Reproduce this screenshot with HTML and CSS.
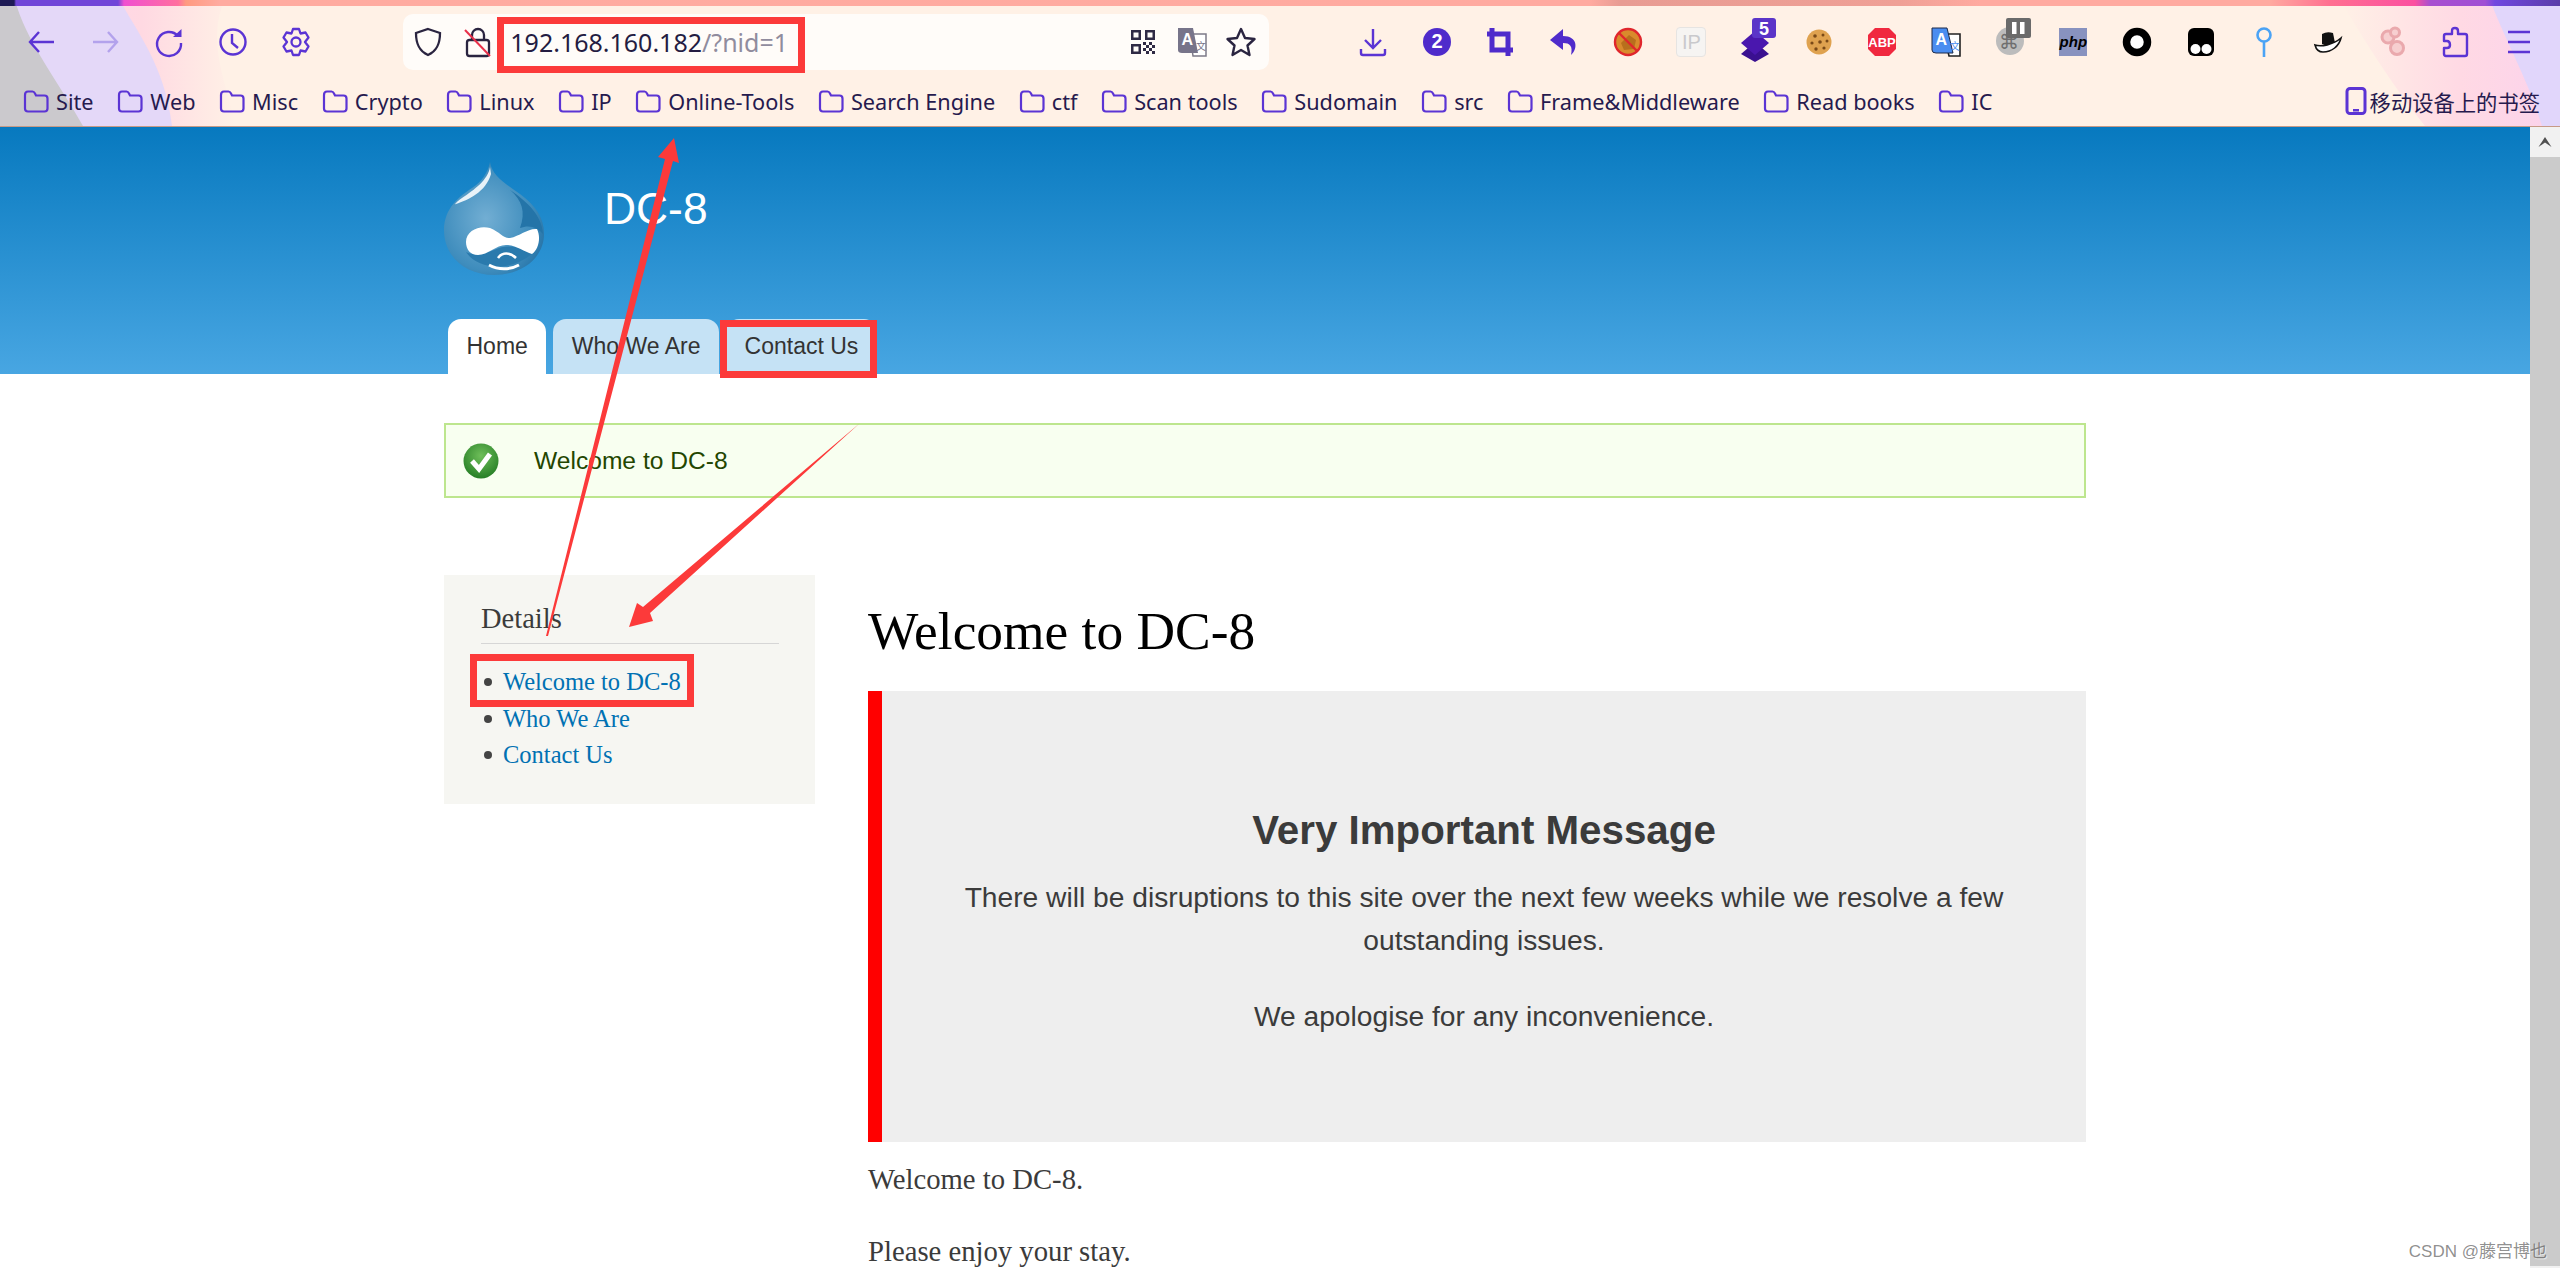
FILE: index.html
```html
<!DOCTYPE html>
<html lang="en">
<head>
<meta charset="UTF-8" />
<meta name="viewport" content="width=device-width, initial-scale=1" />
<title>Welcome to DC-8</title>
<link rel="stylesheet" href="styles.css">
</head>
<body>

<svg width="0" height="0" class="defs">
  <symbol id="folder" viewBox="0 0 26 23">
    <path d="M2 5 Q2 1.5 5 1.5 H9.5 Q11 1.5 12 3.5 L13 5.5 H21.5 Q24.5 5.5 24.5 8.5 V18.5 Q24.5 21.5 21.5 21.5 H5 Q2 21.5 2 18.5 Z" fill="none" stroke="#5b34d4" stroke-width="2.2"/>
  </symbol>
</svg>

<header class="chrome">
  <!-- theme art behind the toolbars -->
  <svg class="theme" viewBox="0 0 2560 127" preserveAspectRatio="none">
    <defs>
      <linearGradient id="leftfade" x1="0" x2="1" y1="0" y2="0">
        <stop offset="0" stop-color="#ffd3f2"/>
        <stop offset="0.6" stop-color="#ffd9e2"/>
        <stop offset="1" stop-color="#fff1e6"/>
      </linearGradient>
      <linearGradient id="rightfade" x1="0" x2="1" y1="0" y2="0">
        <stop offset="0" stop-color="#fff1e6"/>
        <stop offset="0.55" stop-color="#ffd9e4"/>
        <stop offset="1" stop-color="#fbd2ec"/>
      </linearGradient>
    </defs>
    <path d="M0 0 H225 C205 40 228 90 236 127 H0 Z" fill="url(#leftfade)"/>
    <path d="M0 0 H120 C135 30 165 65 172 127 H0 Z" fill="#e4d8f8"/>
    <path d="M0 0 H15 C25 40 60 85 83 127 H0 Z" fill="#cbc9cd"/>
    <path d="M2560 0 H2340 C2370 50 2395 90 2425 127 H2560 Z" fill="url(#rightfade)"/>
    <path d="M2560 0 H2490 C2505 40 2530 85 2542 127 H2560 Z" fill="#e1d6fb"/>
  </svg>

  <div class="strip"></div>

  <div class="toolbar">
    <div class="btn-group">
      <span class="tb"><svg class="ic" viewBox="0 0 32 32" fill="none" stroke="#5b34d4" stroke-width="2.4"><path d="M28 16 H5 M13 6 L4 16 L13 26"/></svg></span>
      <span class="tb"><svg class="ic" viewBox="0 0 32 32" fill="none" stroke="#b3a2ec" stroke-width="2.4"><path d="M4 16 H27 M19 6 L28 16 L19 26"/></svg></span>
      <span class="tb"><svg class="ic" viewBox="0 0 32 32" fill="none" stroke="#5b34d4" stroke-width="2.4"><path d="M25 10 A12 12 0 1 0 28 17"/><path d="M20 11 L28.5 11 L28.5 3 Z" fill="#5b34d4" stroke="none"/></svg></span>
      <span class="tb"><svg class="ic" viewBox="0 0 32 32" fill="none" stroke="#5b34d4" stroke-width="2.4"><circle cx="16" cy="16" r="12.5"/><path d="M15 8 V17 L21 22"/></svg></span>
      <span class="tb"><svg class="ic" viewBox="0 0 32 32" fill="none" stroke="#5b34d4" stroke-width="2.3"><path d="M13 3 H19 L20.5 7.5 L25.5 6.5 L28.5 11.5 L25 16 L28.5 20.5 L25.5 25.5 L20.5 24.5 L19 29 H13 L11.5 24.5 L6.5 25.5 L3.5 20.5 L7 16 L3.5 11.5 L6.5 6.5 L11.5 7.5 Z" stroke-linejoin="round"/><circle cx="16" cy="16" r="4.5"/></svg></span>
    </div>

    <div class="urlbar">
      <svg class="ic" viewBox="0 0 32 32" fill="none" stroke="#2a2440" stroke-width="2.3"><path d="M16 3 L28 7 C28 18 25 25 16 29 C7 25 4 18 4 7 Z"/></svg>
      <svg class="ic lock" viewBox="0 0 32 32" fill="none" stroke="#2a2440" stroke-width="2.3"><rect x="5" y="14" width="22" height="16" rx="2.5"/><path d="M10 14 V9 A6 6 0 0 1 22 9 V14"/><path d="M3 4 L28 30" stroke="#e8304a" stroke-width="2"/></svg>
      <span class="url">192.168.160.182<span class="url-rest">/?nid=1</span></span>
      <div class="url-actions">
        <svg class="ic" viewBox="0 0 32 32"><g fill="#2f2a45"><path d="M4 4 H14 V14 H4 Z M6.5 6.5 V11.5 H11.5 V6.5 Z M18 4 H28 V14 H18 Z M20.5 6.5 V11.5 H25.5 V6.5 Z M4 18 H14 V28 H4 Z M6.5 20.5 V25.5 H11.5 V20.5 Z" fill-rule="evenodd"/><rect x="16" y="16" width="3" height="3"/><rect x="22" y="16" width="3" height="3"/><rect x="19" y="19" width="3" height="3"/><rect x="25" y="19" width="3" height="3"/><rect x="16" y="22" width="3" height="3"/><rect x="22" y="22" width="3" height="3"/><rect x="19" y="25" width="3" height="3"/><rect x="25" y="25" width="3" height="3"/></g></svg>
        <svg class="ic" viewBox="0 0 32 32"><path d="M14 8 H30 V30 H17 Z" fill="#fff" stroke="#7d7a88" stroke-width="1.5"/><path d="M2 2 H17 L22 27 H6 Q2 27 2 24 Z" fill="#77748a"/><text x="5.5" y="19" class="svg-a">A</text><text x="20" y="24" class="svg-zh">文</text></svg>
        <svg class="ic" viewBox="0 0 32 32" fill="none" stroke="#2a2440" stroke-width="2.4"><path d="M16 3 L20 12 L29.5 13 L22.5 19.5 L24.5 29 L16 24 L7.5 29 L9.5 19.5 L2.5 13 L12 12 Z" stroke-linejoin="round"/></svg>
      </div>
    </div>

    <div class="btn-group ext">
      <span class="tb"><svg class="ic" viewBox="0 0 32 32" fill="none" stroke="#5b34d4" stroke-width="2.4"><path d="M16 3 V22 M8 14 L16 22 L24 14 M4 23 V27 Q4 29 6 29 H26 Q28 29 28 27 V23"/></svg></span>
      <span class="tb"><svg class="ic" viewBox="0 0 32 32"><circle cx="16" cy="16" r="14" fill="#4f2bcb"/><text x="16" y="22" class="svg-badge">2</text></svg></span>
      <span class="tb"><svg class="ic" viewBox="0 0 32 32" fill="none" stroke="#4f2bcb" stroke-width="5"><path d="M3 8 H24 V30 M8 2 V24 H29"/></svg></span>
      <span class="tb"><svg class="ic" viewBox="0 0 32 32"><path d="M15 3 L2 14 L15 24 V17 C22 17 25 20 23 29 C30 23 30 10 15 10 Z" fill="#4f2bcb"/></svg></span>
      <span class="tb"><svg class="ic" viewBox="0 0 32 32"><circle cx="16" cy="16" r="13" fill="#d98a2c"/><path d="M9 17 L17 9 L24 14 L22 23 L12 24 Z" fill="#b86f1d"/><circle cx="16" cy="16" r="13" fill="none" stroke="#e0262c" stroke-width="2.4"/><path d="M7 7 L25 25" stroke="#e0262c" stroke-width="2.4"/></svg></span>
      <span class="tb"><span class="ip-badge">IP</span></span>
      <span class="tb"><svg class="ic big" viewBox="0 0 44 44"><path d="M22 24 L36 36 L22 44 L8 36 Z" fill="#3a1090"/><path d="M22 13 L36 25 L22 37 L8 25 Z" fill="#4a17ae"/><rect x="19" y="0" width="24" height="20" rx="3" fill="#5b34c8"/><text x="31" y="17" class="svg-five">5</text></svg></span>
      <span class="tb"><svg class="ic" viewBox="0 0 32 32"><circle cx="16" cy="16" r="12.5" fill="#dfa24f"/><g fill="#7a4a18"><circle cx="12" cy="10" r="1.8"/><circle cx="20" cy="9" r="1.5"/><circle cx="9" cy="17" r="1.6"/><circle cx="17" cy="16" r="1.8"/><circle cx="24" cy="15" r="1.5"/><circle cx="13" cy="23" r="1.7"/><circle cx="21" cy="22" r="1.6"/></g></svg></span>
      <span class="tb"><svg class="ic" viewBox="0 0 32 32"><path d="M9 2 H23 L30 9 V23 L23 30 H9 L2 23 V9 Z" fill="#f0283f"/><text x="16" y="21" class="svg-abp">ABP</text></svg></span>
      <span class="tb"><svg class="ic" viewBox="0 0 32 32"><path d="M14 8 H30 V30 H19 Z" fill="#fff" stroke="#222" stroke-width="1.6"/><path d="M2 2 H17 L23 27 H6 Q2 27 2 24 Z" fill="#4a8df0" stroke="#1d2a4a" stroke-width="1"/><text x="5.5" y="19" class="svg-a">A</text><text x="20" y="24" class="svg-zh blue">文</text></svg></span>
      <span class="tb"><svg class="ic big" viewBox="0 0 44 44"><circle cx="22" cy="23" r="14" fill="#bcbcbc"/><text x="21" y="31" class="svg-cmd">⌘</text><rect x="18" y="0" width="25" height="20" rx="2" fill="#6a6a6a"/><rect x="24" y="4" width="4.5" height="12" fill="#fff"/><rect x="32" y="4" width="4.5" height="12" fill="#fff"/></svg></span>
      <span class="tb"><span class="php-badge">php</span></span>
      <span class="tb"><svg class="ic" viewBox="0 0 32 32"><circle cx="16" cy="16" r="10.5" fill="#fff" stroke="#000" stroke-width="7.5"/></svg></span>
      <span class="tb"><svg class="ic" viewBox="0 0 32 32"><rect x="3" y="2" width="26" height="28" rx="6" fill="#000"/><circle cx="10.5" cy="23" r="5" fill="#fff"/><circle cx="21.5" cy="23" r="5" fill="#fff"/></svg></span>
      <span class="tb"><svg class="ic" viewBox="0 0 32 32" fill="none" stroke="#4ba3f5" stroke-width="2.6"><circle cx="16" cy="9" r="6.5"/><path d="M16 16 V31"/></svg></span>
      <span class="tb"><svg class="ic" viewBox="0 0 32 32"><path d="M10 8 Q15 5 21 7 L23 17 Q16 21 10 18 Z" fill="#111"/><path d="M3 19 C9 21 21 19 29 12 C27 20 20 26 11 26 C7 26 4 23 3 19 Z" fill="#fff" stroke="#111" stroke-width="1.6"/></svg></span>
      <span class="tb"><svg class="ic" viewBox="0 0 32 32" fill="#f7cfd0" stroke="#eaa9ad" stroke-width="3"><circle cx="12" cy="11" r="6"/><circle cx="19" cy="6.5" r="4.5"/><circle cx="21" cy="22" r="6.5"/></svg></span>
      <span class="tb"><svg class="ic" viewBox="0 0 32 32" fill="none" stroke="#5b34d4" stroke-width="2.4"><path d="M13 5 Q13 2 16 2 Q19 2 19 5 V8 H26 Q28 8 28 10 V28 Q28 30 26 30 H7 Q5 30 5 28 V22 H8 Q11 22 11 19 Q11 15 8 15 H5 V10 Q5 8 7 8 H13 Z" stroke-linejoin="round"/></svg></span>
      <span class="tb"><svg class="ic" viewBox="0 0 32 32" fill="none" stroke="#5b34d4" stroke-width="2.6"><path d="M5 6 H27 M5 16 H27 M5 26 H27"/></svg></span>
    </div>
  </div>

  <nav class="bookmarks">
    <a class="bm"><svg class="folder"><use href="#folder"/></svg>Site</a>
    <a class="bm"><svg class="folder"><use href="#folder"/></svg>Web</a>
    <a class="bm"><svg class="folder"><use href="#folder"/></svg>Misc</a>
    <a class="bm"><svg class="folder"><use href="#folder"/></svg>Crypto</a>
    <a class="bm"><svg class="folder"><use href="#folder"/></svg>Linux</a>
    <a class="bm"><svg class="folder"><use href="#folder"/></svg>IP</a>
    <a class="bm"><svg class="folder"><use href="#folder"/></svg>Online-Tools</a>
    <a class="bm"><svg class="folder"><use href="#folder"/></svg>Search Engine</a>
    <a class="bm"><svg class="folder"><use href="#folder"/></svg>ctf</a>
    <a class="bm"><svg class="folder"><use href="#folder"/></svg>Scan tools</a>
    <a class="bm"><svg class="folder"><use href="#folder"/></svg>Sudomain</a>
    <a class="bm"><svg class="folder"><use href="#folder"/></svg>src</a>
    <a class="bm"><svg class="folder"><use href="#folder"/></svg>Frame&amp;Middleware</a>
    <a class="bm"><svg class="folder"><use href="#folder"/></svg>Read books</a>
    <a class="bm"><svg class="folder"><use href="#folder"/></svg>IC</a>
    <a class="bm mobile"><svg class="phone" viewBox="0 0 22 28"><rect x="2" y="1.5" width="18" height="25" rx="3" fill="none" stroke="#5b34d4" stroke-width="3"/><rect x="8" y="22" width="6" height="2.5" fill="#5b34d4"/></svg>移动设备上的书签</a>
  </nav>
</header>

<div class="window">
  <main class="viewport">
    <section class="hero">
      <div class="brand">
        <svg class="logo" viewBox="0 0 100 113">
          <defs>
            <radialGradient id="drop" cx="0.42" cy="0.5" r="0.65">
              <stop offset="0" stop-color="#72aed3"/>
              <stop offset="0.7" stop-color="#3f8dbd"/>
              <stop offset="1" stop-color="#2471a5"/>
            </radialGradient>
          </defs>
          <path d="M46 0 C48 14 62 22 76 32 C92 44 100 56 100 72 C100 96 78 113 50 113 C22 113 0 95 0 68 C0 46 16 34 28 26 C38 20 44 10 46 0 Z" fill="url(#drop)"/>
          <path d="M66 28 C84 40 98 54 99 72 C94 66 86 62 76 66 C82 50 78 38 66 28 Z" fill="#2474a8"/>
          <path d="M22 90 C34 108 66 110 88 92 C76 84 62 82 50 88 C40 92 30 94 22 90 Z" fill="#2a7aad"/>
          <path d="M46 5 C44 18 30 28 18 36 C12 40 10 43 12 42 C24 38 42 30 47 12 Z" fill="#e8f2f8"/>
          <path d="M22 80 C22 68 36 63 46 66 C56 70 60 77 66 76 C76 74 84 66 93 67 C97 75 95 87 88 92 C80 90 72 83 62 83 C52 83 44 93 34 93 C26 93 22 87 22 80 Z" fill="#fff"/>
          <path d="M54 96 C58 90 66 90 72 96" fill="none" stroke="#fff" stroke-width="2.5"/>
          <path d="M45 103 C54 108 66 108 75 103" fill="none" stroke="#fff" stroke-width="2.8"/>
        </svg>
        <div class="site-name">DC-8</div>
      </div>
      <ul class="tabs">
        <li class="tab active">Home</li>
        <li class="tab">Who We Are</li>
        <li class="tab">Contact Us</li>
      </ul>
    </section>

    <div class="container">
      <div class="notice">
        <svg class="check" viewBox="0 0 36 36">
          <defs>
            <radialGradient id="green" cx="0.5" cy="0.35" r="0.7">
              <stop offset="0" stop-color="#6fbf5a"/>
              <stop offset="1" stop-color="#217a22"/>
            </radialGradient>
          </defs>
          <circle cx="18" cy="18" r="17.5" fill="url(#green)"/>
          <path d="M9 18 L16 26 L27 11" fill="none" stroke="#fff" stroke-width="5"/>
        </svg>
        Welcome to DC-8
      </div>

      <div class="columns">
        <aside class="sidebar">
          <h2 class="side-title">Details</h2>
          <ul class="side-list">
            <li><a>Welcome to DC-8</a></li>
            <li><a>Who We Are</a></li>
            <li><a>Contact Us</a></li>
          </ul>
        </aside>

        <article class="content">
          <h1 class="page-title">Welcome to DC-8</h1>
          <div class="alert-box">
            <h3>Very Important Message</h3>
            <p>There will be disruptions to this site over the next few weeks while we resolve a few outstanding issues.</p>
            <p>We apologise for any inconvenience.</p>
          </div>
          <p class="body-text first">Welcome to DC-8.</p>
          <p class="body-text">Please enjoy your stay.</p>
        </article>
      </div>
    </div>
  </main>

  <div class="scrollbar">
    <div class="scroll-up"><svg viewBox="0 0 16 16" width="16" height="16"><path d="M1.5 13 L8 3 L14.5 13 L8 8.5 Z" fill="#505050"/></svg></div>
    <div class="scroll-end"></div>
  </div>
</div>

<!-- red annotation marks drawn over the screenshot -->
<svg class="marks" viewBox="0 0 2560 1268">
  <g fill="none" stroke="#fc3a3a" stroke-width="7">
    <rect x="500.5" y="20.5" width="301" height="49"/>
    <rect x="723.5" y="323.5" width="150" height="51"/>
    <rect x="473.5" y="657.5" width="217" height="46"/>
  </g>
  <path d="M674 138 L679 163 L673 161 L548 636 L546 636 L665 159 L658 157 Z" fill="#fc3a3a"/>
  <path d="M629 627 L637 603 L643 607 L860 423 L650 613 L653 621 Z" fill="#fc3a3a"/>
</svg>

<div class="watermark">CSDN @藤宫博也</div>

</body>
</html>
```

FILE: styles.css
```css
html, body {
  margin: 0; padding: 0;
  height: 1268px;
  overflow: hidden;
  background: #fff;
  font-family: "Liberation Sans", Arial, sans-serif;
}
ul { list-style: none; margin: 0; padding: 0; }
.defs { position: absolute; }

/* browser chrome */
.chrome {
  position: relative;
  height: 127px;
  box-sizing: border-box;
  border-bottom: 1px solid #c79a86;
  background: #fff1e6;
  font-family: "Noto Sans", "Noto Sans CJK SC", sans-serif;
  color: #261a4e;
}
.theme {
  position: absolute;
  top: 0; left: 0;
  width: 100%;
  height: 100%;
}
.strip {
  position: relative;
  height: 6px;
  background: linear-gradient(90deg, #1e1a55 0, #1e1a55 14px, #7045d8 16px, #7045d8 118px, #f050d0 124px, #ff6f9f 178px, #ff9a80 186px, #ffaba0 220px, #ffaaa0 1590px, #e89c93 1620px, #efa096 1900px, #ffaaa0 1980px, #ffaaa0 2270px, #ff6f90 2330px, #fb4fa0 2415px, #a84fd0 2430px, #a04fd4 2485px, #7048e0 2495px, #5a3ca8 2560px);
}
.toolbar {
  position: relative;
  display: flex;
  align-items: center;
  height: 72px;
  padding-left: 10px;
}
.btn-group { display: flex; }
.btn-group.ext { margin-left: 72px; }
.tb {
  display: flex;
  align-items: center;
  justify-content: center;
  width: 63.67px;
  height: 32px;
}
.ic { width: 32px; height: 32px; flex: none; overflow: visible; }
.ic.big { width: 44px; height: 44px; margin-top: -4px; }

.urlbar {
  display: flex;
  align-items: center;
  width: 866px;
  height: 56px;
  margin-left: 75px;
  padding: 0 12px 0 9px;
  box-sizing: border-box;
  background: #fffcf9;
  border-radius: 10px;
}
.lock { margin-left: 18px; }
.url {
  margin-left: 16px;
  font-size: 25px;
  line-height: 32px;
  color: #241c42;
}
.url-rest { color: #908c9e; }
.url-actions {
  display: flex;
  gap: 17px;
  margin-left: auto;
}
.svg-a { font: bold 16px "Liberation Sans", sans-serif; fill: #fff; }
.svg-zh { font: 10px "Noto Sans CJK SC", sans-serif; fill: #77748a; }
.svg-zh.blue { fill: #4a8df0; }
.svg-badge { font: bold 20px "Liberation Sans", sans-serif; fill: #fff; text-anchor: middle; }
.svg-five { font: bold 18px "Liberation Sans", sans-serif; fill: #fff; text-anchor: middle; }
.svg-abp { font: bold 13px "Liberation Sans", sans-serif; fill: #fff; text-anchor: middle; }
.svg-cmd { font: 20px "DejaVu Sans", sans-serif; fill: #6f6f6f; text-anchor: middle; }
.ip-badge {
  width: 28px; height: 28px;
  border: 1px solid #e6e4e2;
  border-radius: 4px;
  background: #f6f4f2;
  color: #c9c9cc;
  font: 20px/28px "Liberation Sans", sans-serif;
  text-align: center;
}
.php-badge {
  width: 28px; height: 28px;
  background: #8892bf;
  color: #000;
  font: italic bold 15px/28px "Liberation Sans", sans-serif;
  text-align: center;
}

.bookmarks {
  position: relative;
  display: flex;
  align-items: center;
  gap: 23.6px;
  height: 46px;
  padding: 0 0 2px 23px;
  font-size: 21.7px;
  white-space: nowrap;
}
.bm {
  display: flex;
  align-items: center;
  gap: 7px;
}
.folder { width: 26px; height: 23px; }
.phone { width: 22px; height: 28px; }
.bm.mobile {
  margin-left: auto;
  margin-right: 20px;
  gap: 3px;
  font-size: 21.3px;
}

/* page area */
.window {
  display: flex;
  height: 1141px;
}
.viewport {
  flex: 1;
  min-width: 0;
  overflow: hidden;
}
.scrollbar {
  display: flex;
  flex-direction: column;
  justify-content: space-between;
  width: 30px;
  background: #cbcbcb;
}
.scroll-up {
  display: flex;
  align-items: center;
  justify-content: center;
  height: 30px;
  background: #f1f1f1;
}
.scroll-end {
  height: 2px;
  background: #f1f1f1;
}

.hero {
  height: 247px;
  padding-left: 444px;
  background: linear-gradient(#0779bf, #48a6e2);
}
.brand {
  display: flex;
  align-items: flex-start;
  height: 192px;
  padding-top: 35px;
  box-sizing: border-box;
}
.logo { width: 100px; height: 113px; }
.site-name {
  margin: 21px 0 0 60px;
  color: #fff;
  font-size: 44.4px;
  line-height: 52px;
}
.tabs {
  display: flex;
  gap: 7px;
  padding-left: 4px;
}
.tab {
  height: 55px;
  padding: 0 18.5px;
  border-radius: 13px 13px 0 0;
  background: #c5e2f5;
  color: #333;
  font-size: 23px;
  line-height: 55px;
}
.tab.active { background: #fff; }

.container {
  width: 1642px;
  margin-left: 444px;
}
.notice {
  display: flex;
  align-items: center;
  height: 75px;
  margin-top: 49px;
  padding-left: 17px;
  box-sizing: border-box;
  border: 2px solid #bde68e;
  background: #f8fff0;
  color: #234600;
  font-size: 24.6px;
}
.check { width: 36px; height: 36px; margin-right: 35px; }

.columns {
  display: flex;
  gap: 53px;
  margin-top: 77px;
}
.sidebar {
  align-self: flex-start;
  width: 371px;
  box-sizing: border-box;
  padding: 28px 36px 30px 37px;
  background: #f6f6f2;
  color: #3b3b3b;
  font-family: "Liberation Serif", serif;
}
.side-title {
  margin: 0;
  padding: 0 0 8px 0;
  border-bottom: 1.5px solid #d6d6d6;
  font-size: 28.5px;
  font-weight: normal;
  line-height: 32px;
}
.side-list {
  margin-top: 20px;
  font-size: 24.5px;
}
.side-list li {
  position: relative;
  height: 36.5px;
  padding-left: 22px;
  line-height: 36.5px;
}
.side-list li::before {
  content: "";
  position: absolute;
  left: 3px; top: 14px;
  width: 8px; height: 8px;
  border-radius: 50%;
  background: #444;
}
.side-list a { color: #0071b3; }

.content { width: 1218px; }
.page-title {
  margin: 26px 0 30px;
  color: #000;
  font: normal 53.4px/60px "Liberation Serif", serif;
}
.alert-box {
  height: 451px;
  box-sizing: border-box;
  padding: 115px 50px 0;
  border-left: 14px solid #f00;
  background: #eee;
  color: #3b3b3b;
  text-align: center;
}
.alert-box h3 {
  margin: 0 0 20px;
  font-size: 40.3px;
  line-height: 50px;
}
.alert-box p {
  margin: 0 0 33px;
  font-size: 28.2px;
  line-height: 43px;
}
.body-text {
  margin: 29px 0 0;
  color: #3b3b3b;
  font: 28.7px/43px "Liberation Serif", serif;
}
.body-text.first { margin-top: 15.5px; }

.marks {
  position: absolute;
  top: 0; left: 0;
  width: 2560px;
  height: 1268px;
  pointer-events: none;
}
.watermark {
  position: absolute;
  right: 13px;
  bottom: 5px;
  color: rgba(80, 80, 80, 0.65);
  font: 17px/22px "Liberation Sans", "Noto Sans CJK SC", sans-serif;
  text-shadow: 1px 1px 1px rgba(255, 255, 255, 0.6);
}
```
